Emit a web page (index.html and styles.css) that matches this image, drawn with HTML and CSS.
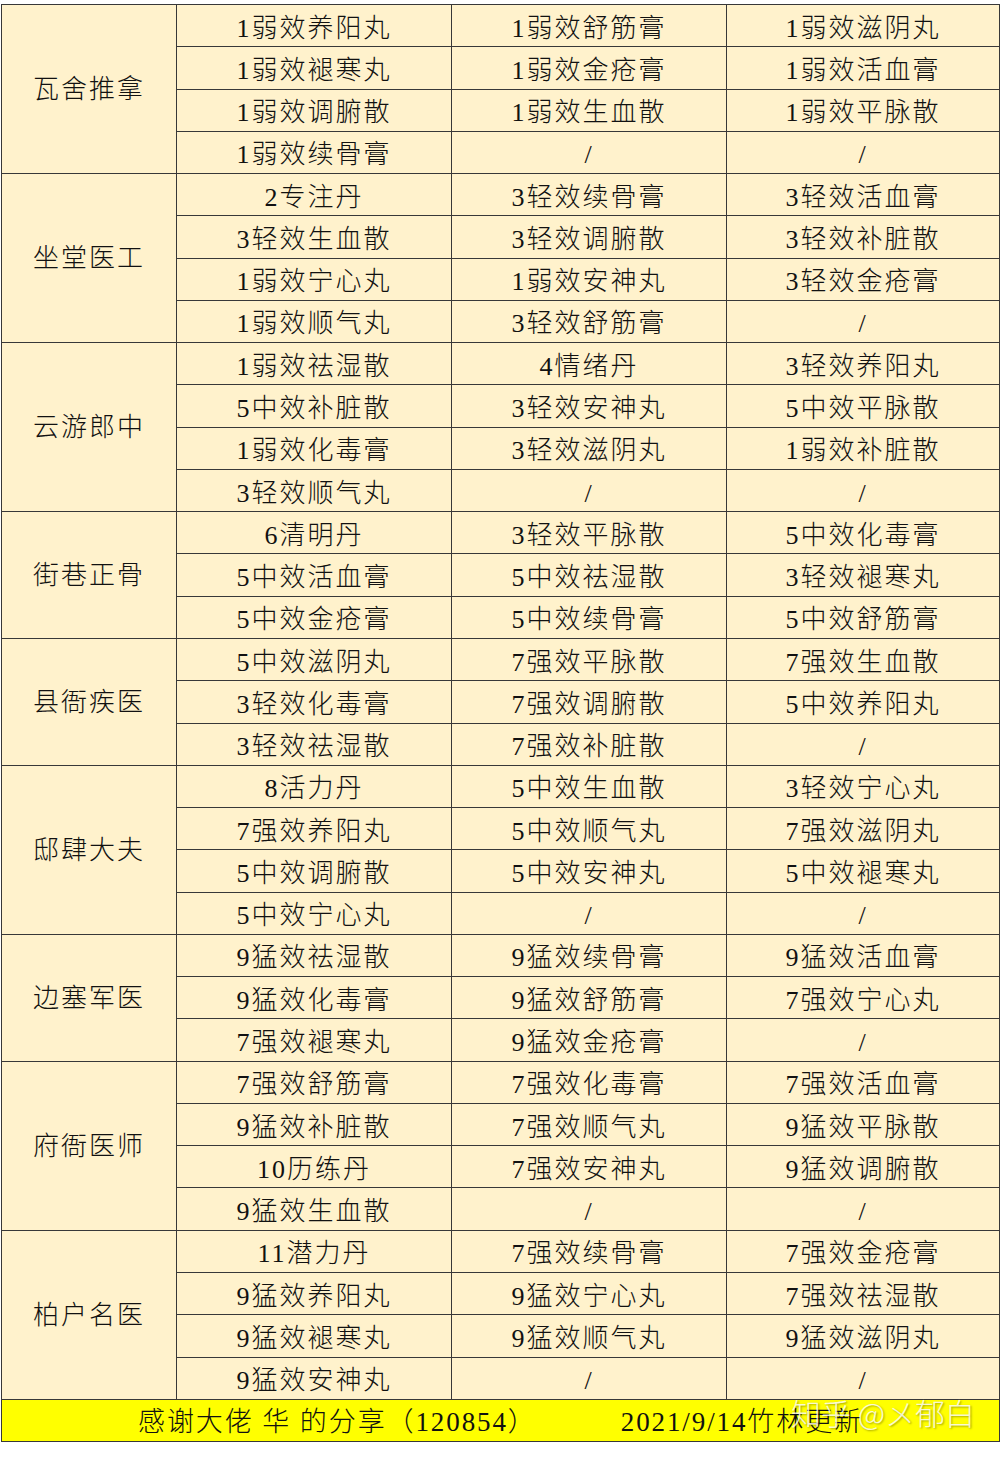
FILE: index.html
```html
<!DOCTYPE html>
<html lang="zh-CN">
<head>
<meta charset="utf-8">
<title>丹药表</title>
<link rel="stylesheet" href="styles.css">
</head>
<body>
<table class="sheet">
<colgroup><col class="c1"><col class="c2"><col class="c3"><col class="c4"></colgroup>
<tbody>
<tr><td class="grp" rowspan="4">瓦舍推拿</td><td>1弱效养阳丸</td><td>1弱效舒筋膏</td><td>1弱效滋阴丸</td></tr>
<tr><td>1弱效褪寒丸</td><td>1弱效金疮膏</td><td>1弱效活血膏</td></tr>
<tr><td>1弱效调腑散</td><td>1弱效生血散</td><td>1弱效平脉散</td></tr>
<tr><td>1弱效续骨膏</td><td>/</td><td>/</td></tr>

<tr><td class="grp" rowspan="4">坐堂医工</td><td>2专注丹</td><td>3轻效续骨膏</td><td>3轻效活血膏</td></tr>
<tr><td>3轻效生血散</td><td>3轻效调腑散</td><td>3轻效补脏散</td></tr>
<tr><td>1弱效宁心丸</td><td>1弱效安神丸</td><td>3轻效金疮膏</td></tr>
<tr><td>1弱效顺气丸</td><td>3轻效舒筋膏</td><td>/</td></tr>

<tr><td class="grp" rowspan="4">云游郎中</td><td>1弱效祛湿散</td><td>4情绪丹</td><td>3轻效养阳丸</td></tr>
<tr><td>5中效补脏散</td><td>3轻效安神丸</td><td>5中效平脉散</td></tr>
<tr><td>1弱效化毒膏</td><td>3轻效滋阴丸</td><td>1弱效补脏散</td></tr>
<tr><td>3轻效顺气丸</td><td>/</td><td>/</td></tr>

<tr><td class="grp" rowspan="3">街巷正骨</td><td>6清明丹</td><td>3轻效平脉散</td><td>5中效化毒膏</td></tr>
<tr><td>5中效活血膏</td><td>5中效祛湿散</td><td>3轻效褪寒丸</td></tr>
<tr><td>5中效金疮膏</td><td>5中效续骨膏</td><td>5中效舒筋膏</td></tr>

<tr><td class="grp" rowspan="3">县衙疾医</td><td>5中效滋阴丸</td><td>7强效平脉散</td><td>7强效生血散</td></tr>
<tr><td>3轻效化毒膏</td><td>7强效调腑散</td><td>5中效养阳丸</td></tr>
<tr><td>3轻效祛湿散</td><td>7强效补脏散</td><td>/</td></tr>

<tr><td class="grp" rowspan="4">邸肆大夫</td><td>8活力丹</td><td>5中效生血散</td><td>3轻效宁心丸</td></tr>
<tr><td>7强效养阳丸</td><td>5中效顺气丸</td><td>7强效滋阴丸</td></tr>
<tr><td>5中效调腑散</td><td>5中效安神丸</td><td>5中效褪寒丸</td></tr>
<tr><td>5中效宁心丸</td><td>/</td><td>/</td></tr>

<tr><td class="grp" rowspan="3">边塞军医</td><td>9猛效祛湿散</td><td>9猛效续骨膏</td><td>9猛效活血膏</td></tr>
<tr><td>9猛效化毒膏</td><td>9猛效舒筋膏</td><td>7强效宁心丸</td></tr>
<tr><td>7强效褪寒丸</td><td>9猛效金疮膏</td><td>/</td></tr>

<tr><td class="grp" rowspan="4">府衙医师</td><td>7强效舒筋膏</td><td>7强效化毒膏</td><td>7强效活血膏</td></tr>
<tr><td>9猛效补脏散</td><td>7强效顺气丸</td><td>9猛效平脉散</td></tr>
<tr><td>10历练丹</td><td>7强效安神丸</td><td>9猛效调腑散</td></tr>
<tr><td>9猛效生血散</td><td>/</td><td>/</td></tr>

<tr><td class="grp" rowspan="4">柏户名医</td><td>11潜力丹</td><td>7强效续骨膏</td><td>7强效金疮膏</td></tr>
<tr><td>9猛效养阳丸</td><td>9猛效宁心丸</td><td>7强效祛湿散</td></tr>
<tr><td>9猛效褪寒丸</td><td>9猛效顺气丸</td><td>9猛效滋阴丸</td></tr>
<tr><td>9猛效安神丸</td><td>/</td><td>/</td></tr>

<tr class="foot"><td colspan="4"><div class="foot-inner"><span>感谢大佬 华 的分享（120854）</span><span class="date">2021/9/14竹林更新</span><span class="mark">知乎 @メ郁白</span></div></td></tr>
</tbody>
</table>
</body>
</html>
```
FILE: styles.css
```css
html, body {
  margin: 0;
  padding: 0;
  background: #ffffff;
}

.sheet {
  border-collapse: collapse;
  table-layout: fixed;
  width: 998px;
  margin: 4px 0 0 1px;
  background: #fff2cc;
  color: #111111;
  font-family: "Liberation Serif", "Noto Sans CJK SC", serif;
  font-size: 26px;
  letter-spacing: 2px;
}

.c1 { width: 175px; }
.c2 { width: 275px; }
.c3 { width: 275px; }
.c4 { width: 273px; }

.sheet td {
  border: 1px solid #383838;
  height: 42.27px;
  padding: 6px 0 0 0;
  box-sizing: border-box;
  text-align: center;
  vertical-align: middle;
  white-space: nowrap;
  line-height: 30px;
  font-weight: 300;
}

.sheet td.grp {
  font-size: 26px;
  letter-spacing: 2px;
  padding-top: 2px;
}

.foot td {
  background: #ffff00;
  height: 42px;
  padding: 0;
  font-size: 27px;
  letter-spacing: 1.9px;
}

.foot-inner {
  position: relative;
  display: flex;
  justify-content: center;
  align-items: center;
  height: 40px;
  padding-top: 4px;
  box-sizing: border-box;
}

.date {
  margin-left: 84px;
}

.mark {
  position: absolute;
  left: 789px;
  top: -3px;
  font-family: "Noto Sans CJK SC", sans-serif;
  font-size: 30px;
  letter-spacing: 0;
  color: rgba(255, 255, 255, 0.82);
  text-shadow: 1px 1px 2px rgba(0, 0, 0, 0.35);
  white-space: nowrap;
}
```
